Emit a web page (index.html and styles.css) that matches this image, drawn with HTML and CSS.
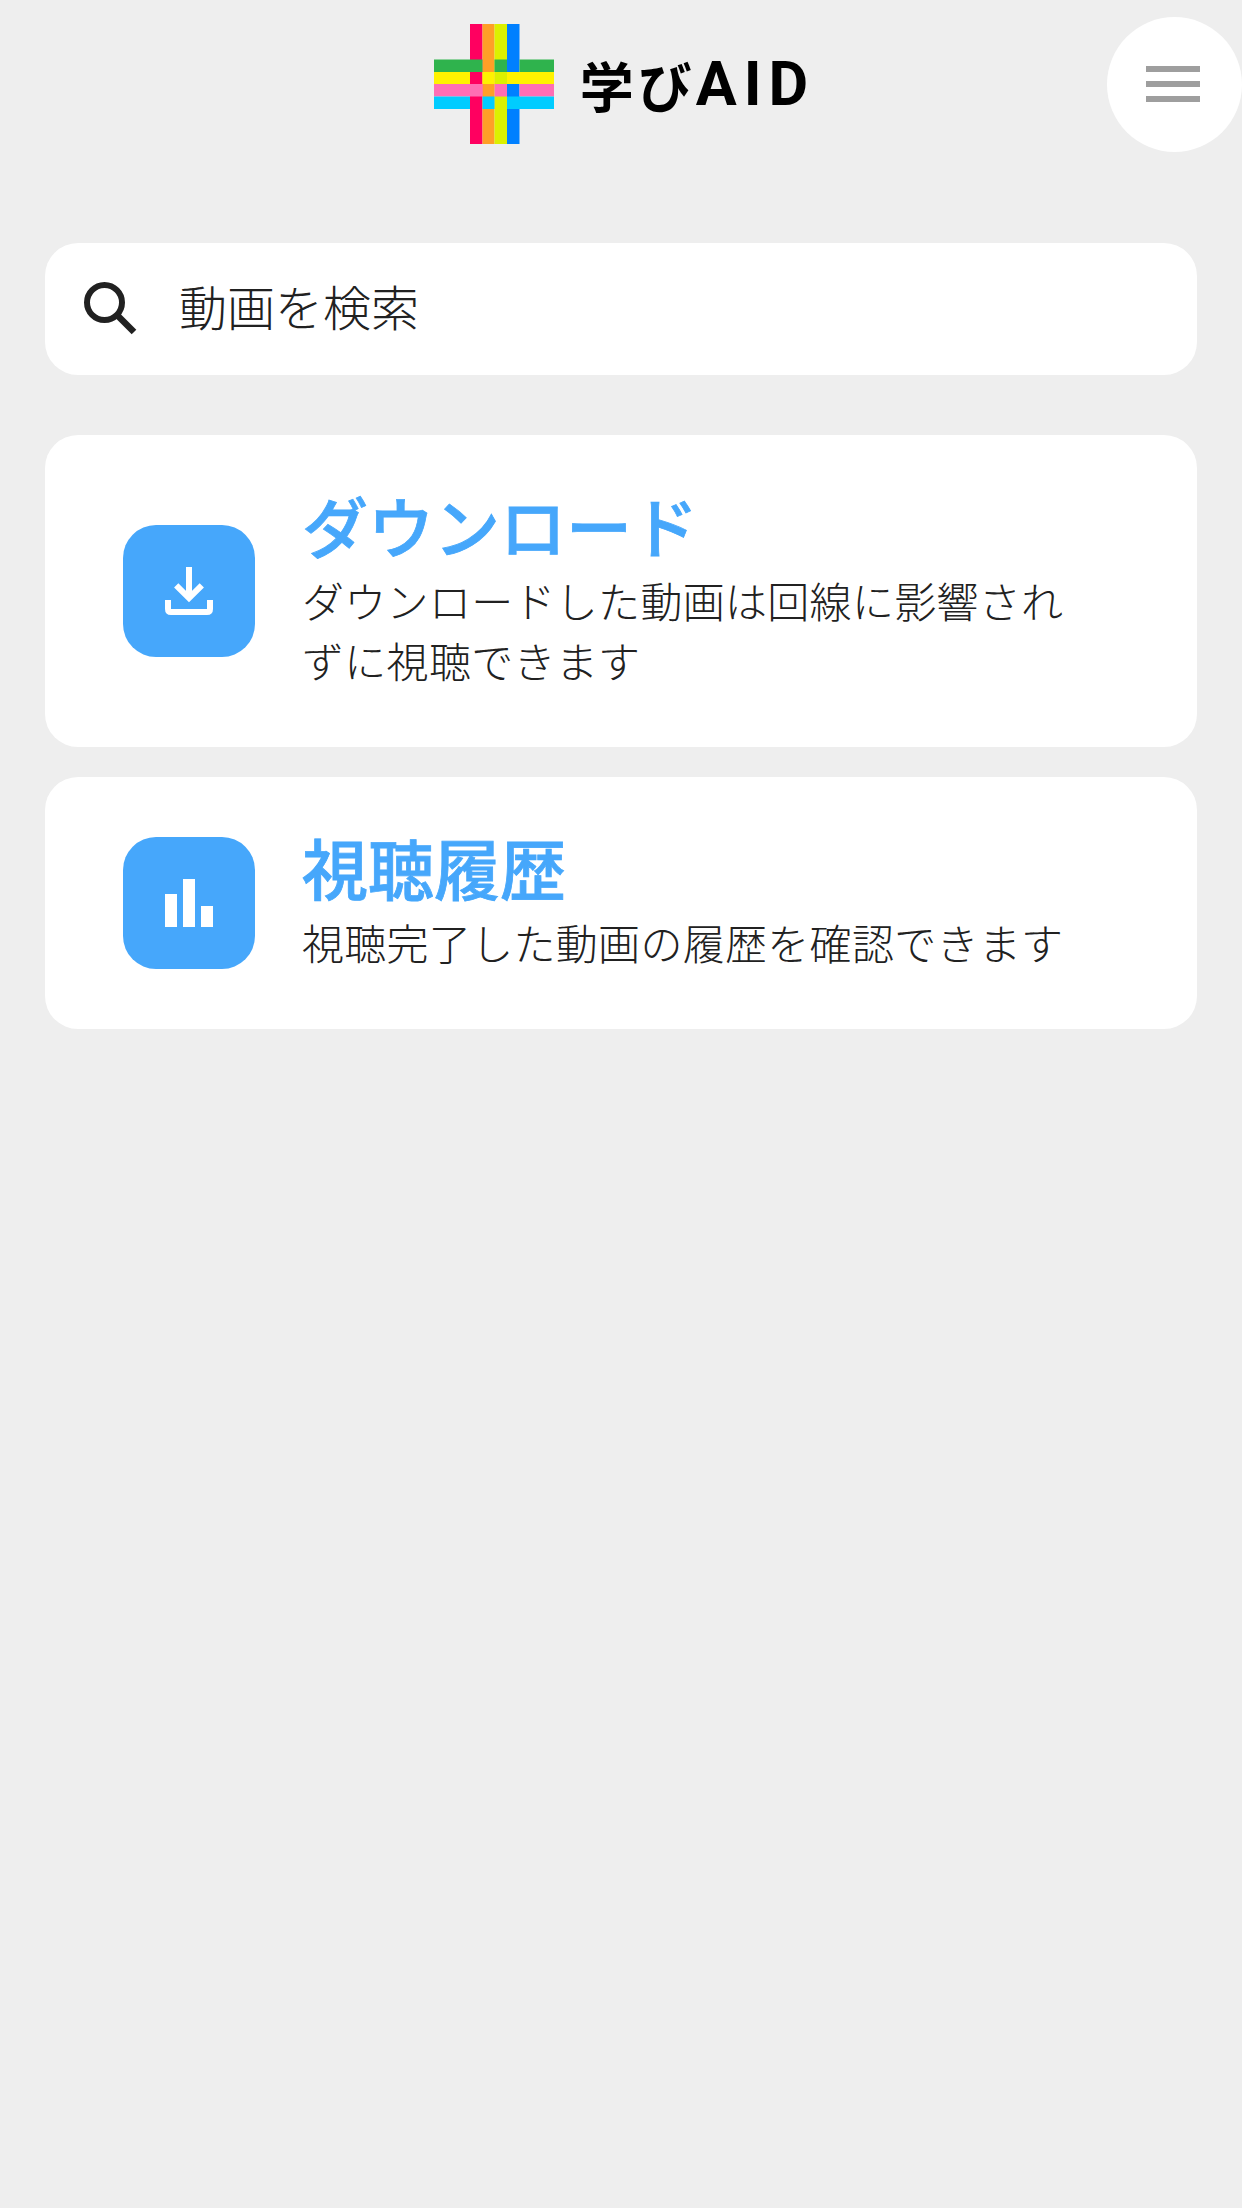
FILE: index.html
```html
<!DOCTYPE html>
<html lang="ja">
<head>
    <meta charset="UTF-8">
    <meta name="viewport" content="width=device-width, initial-scale=1.0">
    <title>学びAID</title>
    <link rel="stylesheet" href="styles.css">
</head>
<body>
    <header class="header">
      <div class="brand">
        <svg class="brand_logo" viewBox="0 0 120 120" width="120" height="120">
          <!-- 縦の帯 -->
          <rect x="36" y="0" width="12.5" height="120" fill="#ff0060"/>
          <rect x="48.5" y="0" width="12" height="120" fill="#ff9f27"/>
          <rect x="60.5" y="0" width="12.5" height="120" fill="#dcf000"/>
          <rect x="73" y="0" width="12.5" height="120" fill="#0080ff"/>
          <!-- 横の帯 -->
          <rect x="0" y="35.5" width="48.5" height="12.5" fill="#2fb34d"/>
          <rect x="60.5" y="35.5" width="12.5" height="12.5" fill="#2fb34d"/>
          <rect x="85.5" y="35.5" width="35" height="12.5" fill="#2fb34d"/>
          <rect x="0" y="48" width="36" height="12" fill="#fff200"/>
          <rect x="48.5" y="48" width="12" height="12" fill="#fff200"/>
          <rect x="73" y="48" width="47.5" height="12" fill="#fff200"/>
          <rect x="0" y="60" width="48.5" height="12.5" fill="#ff6eb4"/>
          <rect x="60.5" y="60" width="12.5" height="12.5" fill="#ff6eb4"/>
          <rect x="85.5" y="60" width="35" height="12.5" fill="#ff6eb4"/>
          <rect x="0" y="72.5" width="36" height="12.5" fill="#00ccff"/>
          <rect x="48.5" y="72.5" width="12" height="12.5" fill="#00ccff"/>
          <rect x="73" y="72.5" width="47.5" height="12.5" fill="#00ccff"/>
        </svg>
        <div class="brand_name"><span class="brand_ja">学び</span><span class="brand_en">AID</span></div>
      </div>
      <button class="menu_btn">
        <i></i><i></i><i></i>
      </button>
    </header>

    <main class="content">
      <div class="search">
        <svg class="search_icon" viewBox="0 0 54 54" width="54" height="54">
          <circle cx="20.5" cy="20.5" r="17.5" fill="none" stroke="#212121" stroke-width="6"/>
          <path d="M33 33 L50 50" fill="none" stroke="#212121" stroke-width="6.5"/>
        </svg>
        <span class="search_text">動画を検索</span>
      </div>

      <div class="card">
        <div class="card_icon">
          <svg viewBox="0 0 48 48" width="48" height="48">
            <path d="M24 0 V31" fill="none" stroke="#fff" stroke-width="6"/>
            <path d="M11.2 18.3 L24 31.1 L36.8 18.3" fill="none" stroke="#fff" stroke-width="6"/>
            <path d="M3 33 V42 Q3 45 6 45 H42 Q45 45 45 42 V33" fill="none" stroke="#fff" stroke-width="6"/>
          </svg>
        </div>
        <div class="card_body">
          <h2>ダウンロード</h2>
          <p>ダウンロードした動画は回線に影響されずに視聴できます</p>
        </div>
      </div>

      <div class="card">
        <div class="card_icon">
          <svg viewBox="0 0 48 48" width="48" height="48">
            <rect x="0" y="15" width="12" height="33" fill="#fff"/>
            <rect x="18" y="0" width="12" height="48" fill="#fff"/>
            <rect x="36" y="27" width="12" height="21" fill="#fff"/>
          </svg>
        </div>
        <div class="card_body">
          <h2>視聴履歴</h2>
          <p>視聴完了した動画の履歴を確認できます</p>
        </div>
      </div>
    </main>
</body>
</html>
```
FILE: styles.css
```css
body{
    margin: 0;
    min-height: 2208px;
    background-color: #eeeeee;
    color: #212121;
    font-family: "Noto Sans CJK JP", "Noto Sans", sans-serif;
}
.header{
    position: relative;
    height: 243px;
    box-sizing: border-box;
    padding-top: 24px;
    display: flex;
    justify-content: center;
    align-items: flex-start;
}
.brand{
    display: flex;
    align-items: center;
    gap: 26px;
    height: 120px;
}
.brand_logo{
    display: block;
}
.brand_name{
    display: flex;
    align-items: center;
    color: #000;
    font-weight: 700;
}
.brand_ja{
    font-size: 54px;
    letter-spacing: 4px;
}
.brand_en{
    margin-right: -7px;
    font-family: "Roboto", "Liberation Sans", sans-serif;
    font-size: 61px;
    letter-spacing: 7px;
}
/* メニューボタンは右上に重ねる */
.menu_btn{
    position: absolute;
    top: 17px;
    right: 0;
    width: 135px;
    height: 135px;
    padding: 0 3px 1px 0;
    border: 0;
    border-radius: 50%;
    background-color: #fff;
    display: flex;
    flex-direction: column;
    align-items: center;
    justify-content: center;
    gap: 9px;
}
.menu_btn i{
    display: block;
    width: 54px;
    height: 6px;
    background-color: #9e9e9e;
}
.content{
    padding: 0 45px;
}
.search{
    display: flex;
    align-items: center;
    height: 132px;
    margin-bottom: 60px;
    padding-left: 39px;
    gap: 41px;
    background-color: #fff;
    border-radius: 33px;
}
.search_icon{
    flex: none;
}
.search_text{
    padding-bottom: 8px;
    font-size: 48px;
    font-weight: 300;
}
.card{
    display: flex;
    align-items: center;
    gap: 47px;
    margin-bottom: 30px;
    padding: 58px 120px 58px 78px;
    background-color: #fff;
    border-radius: 33px;
}
.card_icon{
    flex: none;
    width: 132px;
    height: 132px;
    display: flex;
    align-items: center;
    justify-content: center;
    background-color: #46a7fb;
    border-radius: 33px;
}
.card_body{
    margin: 1px 0 -1px;
}
.card_body h2{
    margin: 0 0 16px;
    color: #46a7fb;
    font-size: 66px;
    line-height: 60px;
    font-weight: 500;
    -webkit-text-stroke: 0.8px #46a7fb;
}
.card_body p{
    margin: 0;
    font-size: 42px;
    line-height: 60px;
    font-weight: 300;
    letter-spacing: 0.3px;
}
```
